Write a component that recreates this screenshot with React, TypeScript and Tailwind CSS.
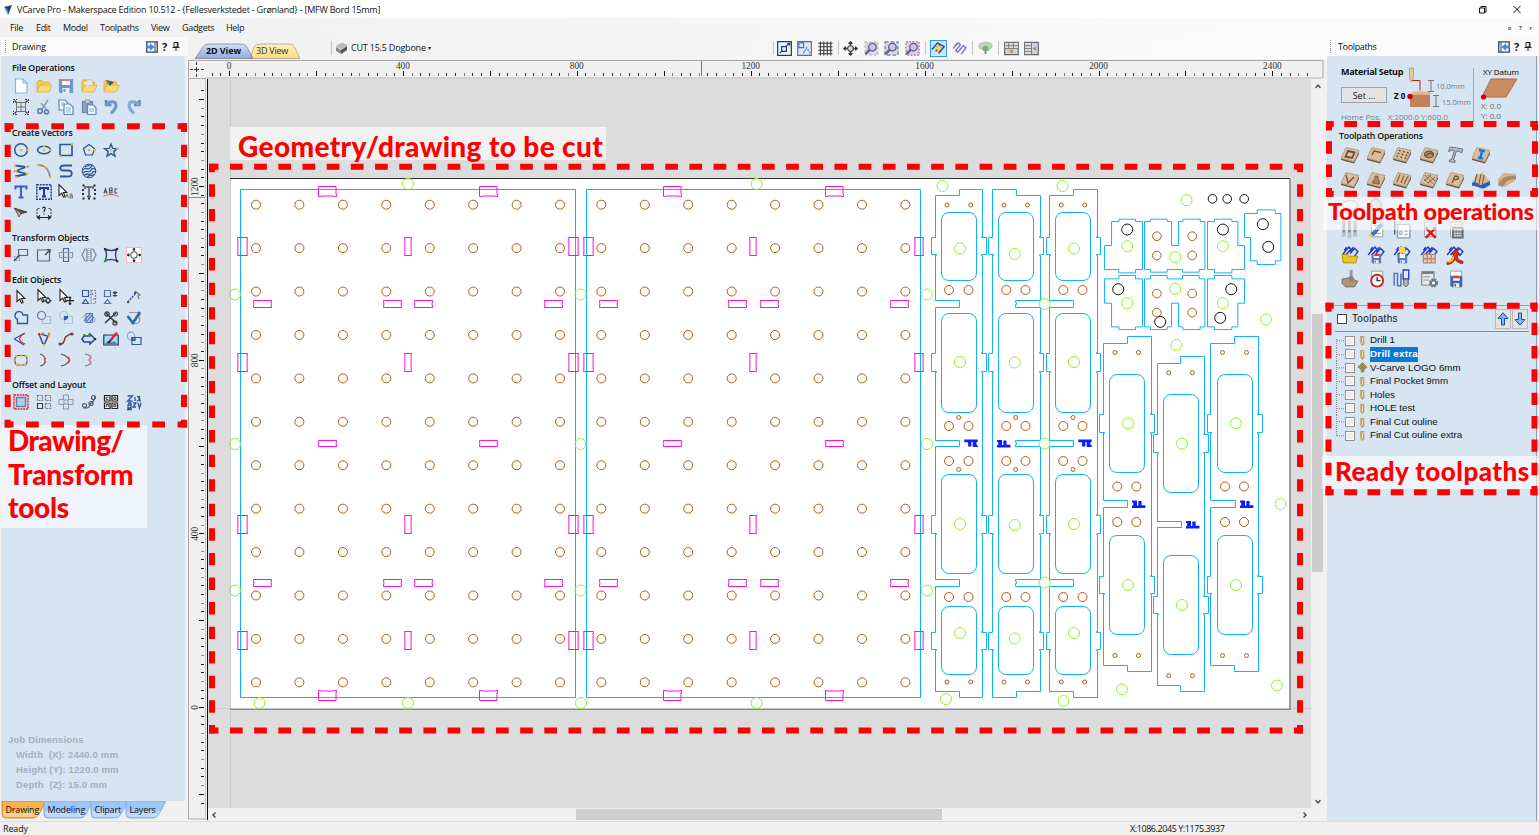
import React from "react";

const BROWN = "#b35c12";
const CYAN = "#12b2fb";
const LIME = "#86f81e";
const MAGENTA = "#f512e2";
const NAVY = "#2f5597";

/* ---------- icons ---------- */

const G = ({ children, s = 16 }: { children?: React.ReactNode; s?: number }) => (
  <svg width={s} height={s} viewBox="0 0 16 16" fill="none" stroke={NAVY} strokeWidth="1.2" className="block shrink-0 overflow-visible">
    {children}
  </svg>
);

const dot = (x: number, y: number, c = "#e8b33a") => <rect key={`${x}-${y}`} x={x - 1} y={y - 1} width="2.2" height="2.2" fill={c} stroke="none" />;

const folder = (
  <>
    <path d="M1 13.500V3.500l1-1h4l1.500 1.500h6V7" fill="#f3c85a" stroke="#d9a93c" strokeWidth=".8" />
    <path d="M1 14L4 7h12l-3 7z" fill="#fbd976" stroke="#e0ac3c" strokeWidth=".8" />
  </>
);
const floppy = (c: string) => (
  <>
    <path d="M1.500 1.500h13v13h-12l-1-1z" fill={c} stroke={c} />
    <path d="M4 1h8v6H4z" fill="#fff" stroke="none" />
    <path d="M4.500 10h7v5h-7z" fill="#e8edf5" stroke="none" />
    <path d="M5.500 11h2v3h-2z" fill={c} stroke="none" />
  </>
);
const arrowCursor = <path d="M4 1.500v11l2.700-2.400 1.800 4 1.600-.7-1.700-3.900h3.400z" fill="#fff" stroke="#222" strokeWidth="1.100" />;

const fileIcons: React.ReactNode[][] = [
  [
    <G key="a"><path d="M2.500 1h7.500l4 4v10h-11.500z" fill="#fdfeff" stroke="#8fb2dc" /><path d="M10 1v4h4" stroke="#8fb2dc" /></G>,
    <G key="b">{folder}</G>,
    <G key="c">{floppy("#6d97cf")}<path d="M4 1h8v2H4z" fill="#e57f67" stroke="none" /></G>,
    <G key="d"><path d="M2 2h8v9H2z" fill="#fff" stroke="#e0ac3c" />{folder}<path d="M3 4l7-2 2 5H4z" fill="#dbe8f8" stroke="none" /></G>,
    <G key="e">{folder}<path d="M3 2l8 2-4 4z" fill="#555" stroke="none" /><circle cx="5" cy="5" r="1.500" fill="#4a8" stroke="none" /></G>,
  ],
  [
    <G key="a"><path d="M3.500 3.500h9v9h-9zM8 3.500v9M3.500 8h9" stroke="#666" strokeWidth=".9" /><path d="M.5 4V.5H4M12 .5h3.500V4M15.500 12v3.500H12M4 15.500H.5V12" stroke="#333" strokeWidth="1" strokeDasharray="2 1" /><path d="M1.500 1.500l2 2M14.500 1.500l-2 2M14.500 14.500l-2-2M1.500 14.500l2-2" stroke="#333" /></G>,
    <G key="b"><path d="M12 1L6 10M5 4l6 7" stroke="#8a9bb5" strokeWidth="1.600" /><circle cx="4" cy="12" r="2.300" stroke="#5779ad" strokeWidth="1.600" /><circle cx="10.500" cy="13" r="2" stroke="#5779ad" strokeWidth="1.600" /></G>,
    <G key="c"><path d="M1 1h6l2.500 2.500V11H1z" fill="#f3f8ff" stroke="#5d86be" /><path d="M6 5h6l3 3v7.500H6z" fill="#f3f8ff" stroke="#5d86be" /><path d="M8 9h5M8 11h5M8 13h5M3 4h3M3 6h2" stroke="#6f98d0" strokeWidth=".8" /></G>,
    <G key="d"><path d="M1.500 2.500h10v11h-10z" fill="#8c9fc9" stroke="#6e80ad" /><path d="M4 1h5v3H4z" fill="#d6d6dd" stroke="#777" strokeWidth=".7" /><path d="M6.500 6h6l2.500 3v6.500H6.500z" fill="#f3f8ff" stroke="#5d86be" /><path d="M8 10h5M8 12h5" stroke="#6f98d0" strokeWidth=".8" /></G>,
    <G key="e"><path d="M3 7V1M2.500 6h6" stroke="#5f88c2" strokeWidth="2.600" /><path d="M3 6.500c3-5 10-5 10 0 0 3-2 5-5 8" stroke="#7196cb" strokeWidth="3" /></G>,
    <G key="f"><path d="M13.500 7V1M14 6H8" stroke="#5f88c2" strokeWidth="2.600" /><path d="M13 6.500C10 1.500 3 1.500 3 6.500c0 3 2 5 5 8" stroke="#84a6d3" strokeWidth="3" /></G>,
  ],
];

const vectorIcons: React.ReactNode[][] = [
  [
    <G key="a"><circle cx="8" cy="8" r="6.300" strokeWidth="1.500" />{dot(8, 8)}{dot(14.500, 8)}</G>,
    <G key="b"><ellipse cx="8" cy="8" rx="6.500" ry="3.800" strokeWidth="1.500" />{dot(8, 8)}{dot(8, 4)}{dot(14.500, 8)}</G>,
    <G key="c"><path d="M2 2.500h12v11H2z" strokeWidth="1.600" />{dot(14, 2)}{dot(2, 14)}</G>,
    <G key="d"><path d="M8 2.500l5.500 4-2 6.500h-7l-2-6.500z" />{dot(8, 8)}{dot(13.500, 8)}</G>,
    <G key="e"><path d="M8 2l1.700 4.400 4.800.2-3.800 3 1.300 4.600L8 11.600l-4 2.600 1.300-4.600-3.800-3 4.800-.2z" strokeWidth="1.400" />{dot(8, 8)}{dot(14.500, 7)}</G>,
  ],
  [
    <G key="a"><path d="M2 2.500l11 1.500L3 8l11 3-12 2.500" strokeWidth="1.800" />{dot(2, 3)}{dot(13, 4)}{dot(3, 8)}{dot(14, 11)}{dot(3, 14)}</G>,
    <G key="b"><path d="M2 2c7 0 11 5 12 12" strokeWidth="1.600" stroke="#888" />{dot(2, 2)}{dot(9, 4)}{dot(14, 14)}</G>,
    <G key="c"><path d="M14 2.500H6c-5 0-5 5 0 5h4c5 0 5 6 0 6H2" strokeWidth="1.800" /></G>,
    <G key="d"><circle cx="8" cy="8" r="6.800" strokeWidth="1" /><path d="M2 7c3-4 5 1 7-2s2-3 3-3M2 10c4-4 6 1 8-3 1-2 2-2 4-1M3 13c3-5 6 1 8-3 1-2 2-2 4-1M6 14.500c2-4 4 0 7-3M4 4c2-2 4 0 5-2.500" strokeWidth="1.300" /></G>,
  ],
  [
    <G key="a"><path d="M2.500 5.500v-3h11v3M8 2.500v11M5.500 13.500h5" stroke="#4355b5" strokeWidth="1.900" /></G>,
    <G key="b"><path d="M.8.8h14.400v14.400H.8z" stroke="#26339a" strokeWidth="1.500" strokeDasharray="2 1" /><path d="M4 6V4h8v2M8 4v8.500M6 12.500h4" stroke="#26339a" strokeWidth="2" /></G>,
    <G key="c"><g transform="translate(-3 -1)">{arrowCursor}</g><path d="M7.500 14L9 10l1.500 4M12 10v4h2.500v-2H12M12 10h2v2" stroke="#777" strokeWidth="1" /></G>,
    <G key="d"><path d="M4 5V3h8v2M8 3v9M6 12.500h4" stroke="#555" strokeWidth="1.500" /><path d="M1.500 1.500h2M12.500 1.500h2M1.500 14.500h2M12.500 14.500h2M7 14.500h2M2 5v2M2 9v2M14 5v2M14 9v2" stroke="#222" strokeWidth="1.800" /></G>,
    <G key="e"><path d="M1 9.500L2.500 5 4 9.500M1.500 8h2M6.500 4v5h2.500V4H6.500M6.500 6.500h2.500M14.500 5H12v4h2.500" stroke="#555" strokeWidth="1.200" /><path d="M.5 12.500c4-2.500 10-2.500 15 0" stroke="#b55" strokeWidth=".9" /></G>,
  ],
  [
    <G key="a"><path d="M1 3l13 4-7 2z" fill="#555" stroke="#333" strokeWidth=".8" /><path d="M2 4l4 8 2-4z" fill="#e9a58f" stroke="#444" strokeWidth=".8" /></G>,
    <G key="b"><path d="M1 12V3.500h3.500M15 12V3.500h-3.500" stroke="#555" strokeDasharray="2 1" /><path d="M1.500 12.500h13M4 10.500l-2.500 2 2.500 2M12 10.500l2.500 2-2.500 2M8 8.500v1" stroke="#222" /><path d="M6.500 3.500c.5-2 3-1.500 2.800 0C9 5 8 5 8 7" stroke="#222" /></G>,
  ],
];

const transformIcons: React.ReactNode[][] = [
  [
    <G key="a"><path d="M5.500 2.500h9v6h-9z" stroke="#57698b" /><path d="M1.500 9.500h5v4h-5z" stroke="#9fb0ca" /><path d="M1 14l6-6" stroke="#444" /></G>,
    <G key="b"><path d="M1.500 3h12v11h-12z" stroke="#57698b" /><path d="M9 8l5-5M11 2.500h3v3" stroke="#444" /></G>,
    <G key="c"><path d="M5.500 1.500h5v13h-5z" stroke="#57698b" /><path d="M1.500 5.500h13v5h-13z" stroke="#8a9ab5" /></G>,
    <G key="d"><path d="M6 2v12H4L1 8l3-6zM10 2v12h2l3-6-3-6z" stroke="#7d8ca6" /><path d="M8 1v14" stroke="#999" strokeDasharray="1 1" /></G>,
    <G key="e"><path d="M2 2c4 2 8 2 12 0-2 4-2 8 0 12-4-2-8-2-12 0 2-4 2-8 0-12z" stroke="#33466e" strokeWidth="1.400" />{dot(2, 14, "#2a2")}{dot(14, 2, "#333")}{dot(14, 14, "#333")}{dot(2, 2, "#333")}</G>,
    <G key="f"><path d="M.5.500h15v15H.500z" fill="#fff" stroke="#f2bcbc" /><circle cx="8" cy="8" r="3.200" stroke="#555" strokeWidth="1.100" /><path d="M8 1v3M8 12v3M1 8h3M12 8h3" stroke="#222" /><path d="M6.300 3L8 .8 9.700 3zM6.300 13L8 15.200 9.700 13zM3 6.300L.8 8 3 9.700zM13 6.300L15.200 8 13 9.700z" fill="#222" stroke="none" /></G>,
  ],
];

const editIcons: React.ReactNode[][] = [
  [
    <G key="a">{arrowCursor}</G>,
    <G key="b"><g transform="translate(-2 -1)">{arrowCursor}</g><circle cx="12" cy="11.500" r="2" stroke="#222" /><path d="M12 8v1.500M12 13.500V15M8.500 11.500H10M14 11.500h1.500" stroke="#222" /></G>,
    <G key="c"><g transform="translate(-2 -1)">{arrowCursor}</g><path d="M12 8v7.500M8 11.700h8M10.800 9.200L12 8l1.200 1.200M10.800 14.300l1.200 1.200 1.200-1.200" stroke="#222" strokeWidth="1.200" /></G>,
    <G key="d"><path d="M1.500 1.500h6v6h-6zM4.500 10.500l3 4h-6z" stroke="#3f52a3" /><path d="M10 1.500h4.500v13H10zM11.500 4v3M13 9v3" stroke="#888" strokeDasharray="2 1" /></G>,
    <G key="e"><path d="M1.500 1.500h6v6h-6zM4.500 10.500l3 4h-6z" stroke="#5a6cb5" /><path d="M10 3l4 4M14 3l-4 4M12 2v6" stroke="#444" /></G>,
    <G key="f"><path d="M2 13L9 5" stroke="#3b4fa5" strokeDasharray="2 1" strokeWidth="1.500" /><path d="M9 2l5 4-2 1 1 3" stroke="#777" />{dot(2, 13, "#555")}{dot(9, 4, "#3b4fa5")}</G>,
  ],
  [
    <G key="a"><path d="M5 9.500A4 4 0 1 1 10 5h4.500v8.500h-10V9.500z" strokeWidth="1.400" /></G>,
    <G key="b"><circle cx="5.500" cy="5.500" r="4" stroke="#5a7bb0" /><path d="M6.500 13.500h8v-7h-4M6.500 13.500V10" stroke="#a5b7d2" /></G>,
    <G key="c"><circle cx="5.500" cy="5.500" r="4" stroke="#b5c4dc" /><path d="M6.500 6.500h8v7h-8z" stroke="#b5c4dc" /><path d="M6.500 6.500h3c0 2-1 3-3 3z" fill="#4f70a8" /></G>,
    <G key="d"><path d="M5 3.500h6.500v9H5z" stroke="#5a7bb0" /><path d="M3 11L10 3M5 12.500l6.500-8M8 13l5-6" stroke="#5a7bb0" /><path d="M2 8a3 3 0 0 1 3-3M14 8a3 3 0 0 1-3 4" stroke="#9fb0ca" /></G>,
    <G key="e"><path d="M2 13L14 2M3 3l10 10" stroke="#333" strokeWidth="1.500" /><circle cx="4" cy="4" r="2.200" stroke="#333" /><circle cx="12.500" cy="4" r="2" stroke="#555" /><circle cx="12" cy="13" r="2" stroke="#333" /></G>,
    <G key="f"><path d="M3 2.500h9c3 0 2 4 0 5 3 1 2 6-2 6H5" stroke="#8a9ab0" /><path d="M1.500 6l5.500 7 7-11" stroke="#2f6ca3" strokeWidth="2.600" /></G>,
  ],
  [
    <G key="a"><path d="M12 2C8 4 5 6 1 8" /><path d="M1.500 8L11 14" /><path d="M11 3C5 6 5 10 12 13" stroke="#c33" strokeWidth="1.300" /></G>,
    <G key="b"><path d="M3 3l4 10M13 3L8 14M5 3l6 2" stroke="#3b4fa5" strokeWidth="1.600" />{dot(3, 3, "#e22")}{dot(7, 2)}{dot(13, 2)}{dot(13, 5)}{dot(8, 14, "#e8b33a")}</G>,
    <G key="c"><path d="M2 13c6 1 3-7 7-8 2-1 2-2 5-2" stroke="#9d3040" strokeWidth="1.500" /><circle cx="2" cy="13" r="1" stroke="#444" /><circle cx="14" cy="3" r="1" stroke="#444" /></G>,
    <G key="d"><path d="M3 5h6V3l5 5-5 5v-2H3L1 8z" stroke="#2c3f9f" strokeWidth="1.500" />{dot(3, 4, "#2a2")}{dot(8, 4, "#2a2")}{dot(14, 8, "#333")}</G>,
    <G key="e"><path d="M.8 4h14.400v10H.8z" fill="#a9d6f7" stroke="#234" /><path d="M1.500 13.500l4-4 3 2 3-1 3 3z" fill="#4b7d9c" stroke="none" /><path d="M7 10l4-5 3-3.500" stroke="#d23" strokeWidth="2.400" /><path d="M5 12l2.500-2.500" stroke="#222" strokeWidth="1.500" /></G>,
    <G key="f"><circle cx="5" cy="5" r="3.800" stroke="#8aa3cb" /><path d="M6 6.500h9v7H6z" fill="#cfe6fa" /><path d="M6 6.500h3v3H6z" fill="#5784c4" /></G>,
  ],
  [
    <G key="a"><rect x="2" y="3.500" width="12" height="9.500" rx="3.500" />{[[3, 4], [8, 3.500], [13, 4], [1.500, 8], [14, 8], [4, 13], [8, 13], [12, 13]].map(([x, y]) => dot(x, y))}</G>,
    <G key="b"><path d="M4 2c4 1 5 4 5 5M4 14c3 0 5-3 5-4" stroke="#555" /><path d="M9 6v5" stroke="#d33" strokeWidth="1.500" /></G>,
    <G key="c"><path d="M3 2c5 1 7 4 8 5M3 14c5-1 7-3 8-5" stroke="#555" /><path d="M10 5c2 2 2 4 0 6" stroke="#d33" strokeWidth="1.500" /></G>,
    <G key="d"><path d="M4 2c5 1 6 3 6 4M4 14c5-1 6-3 6-4" stroke="#777" /><path d="M10 6l-2 2 2 2" stroke="#d66" strokeWidth="1.300" /></G>,
  ],
];

const layoutIcons: React.ReactNode[][] = [
  [
    <G key="a"><path d="M1 1h14v14H1z" stroke="#d22" strokeWidth="1.400" strokeDasharray="2 .8" /><path d="M3.500 3.500h9v9h-9z" fill="#b9cdea" stroke="#6681b0" strokeWidth="1.500" /></G>,
    <G key="b"><path d="M1.500 9.500h5v5h-5z" stroke="#444" /><path d="M1.500 1.500h5v5h-5zM9.500 1.500h5v5h-5zM9.500 9.500h5v5h-5z" stroke="#777" strokeDasharray="2 1" /></G>,
    <G key="c"><path d="M5.500 1h5v5h-5zM5.500 10h5v5h-5zM1 5.500h5v5H1zM10 5.500h5v5h-5z" stroke="#7f8ea6" strokeWidth=".9" /></G>,
    <G key="d"><path d="M2 14h4c3 0 2-3 4-5 3-2 4-4 4-7" stroke="#3b4fa5" /><circle cx="3.500" cy="11.500" r="2" stroke="#555" /><circle cx="12.500" cy="3.500" r="2" stroke="#555" /><circle cx="10" cy="9.500" r="2" stroke="#555" /></G>,
    <G key="e"><path d="M1.500 1.500h5.500v5.500H1.500zM9 1.500h5.500v5.500H9zM1.500 9h5.500v5.500H1.500zM9 9h5.500v5.500H9z" fill="#fff" stroke="#222" strokeWidth="1.200" /><path d="M5.500 3.200H3.200v2.200h2.300M10.800 3v2.500h2V3z M3.300 13v-2.500h2V13M10.800 10.500h2v2.200h-2z" stroke="#222" strokeWidth=".9" /></G>,
    <G key="f"><path d="M1.500 2h5l-5 5h5M9 3v4M11 2.500c3 0 3 4 0 4.500M14 2c-2 2 1 4 0 6M2 9h3v5H2v-3h3M7 9h3l-3 4h3M12 9l1.500 5L15 9M1 15.500h5" strokeWidth="1.300" /></G>,
  ],
];

/* wooden tile with an engraved mark */
const Tile = ({ children }: { children?: React.ReactNode }) => (
  <svg width="20" height="18" viewBox="0 0 20 18" fill="none" stroke="#65503f" strokeWidth="1.300" className="block shrink-0">
    <path d="M1 12.500L14 16l5-10.500v2.500l-5 9.500L1 14z" fill="#6f523c" stroke="none" />
    <path d="M6 1.500L19 4.500 14 15.500 1 12z" fill="#dcbd9a" stroke="#a98a6c" strokeWidth=".7" />
    {children}
  </svg>
);

const opIcons: React.ReactNode[][] = [
  [
    <Tile key="a"><path d="M8 5l6.500 1.500-2.500 5.500L5.500 10.500z" strokeWidth="1.800" /></Tile>,
    <Tile key="b"><path d="M6 9l2-4 7 1.500" /></Tile>,
    <Tile key="c"><path d="M8 4l-3 7M12 5l-3 7M16 6l-3 7" strokeDasharray="1.500 1.500" strokeWidth="1.800" /></Tile>,
    <Tile key="d"><ellipse cx="10" cy="8.500" rx="4.500" ry="3.300" fill="#b3906f" /><path d="M7 10c2-3 5-3 7-2" /></Tile>,
    <svg key="e" width="20" height="18" viewBox="0 0 20 18" fill="#b9bec6" stroke="#6d737c" strokeWidth="1"><path d="M5 1l13 2-1.500 4-2-1.500-3-.5-3 9 2 1-.5 1.500-6-1 .5-1.500 2-.3 3-9-3-.5-3 1.500z" /></svg>,
    <Tile key="f"><path d="M8 4l6 1.300M7 11.500l5 1.200M11 5l-1.500 7" stroke="#1277e0" strokeWidth="2.400" /></Tile>,
  ],
  [
    <Tile key="a"><path d="M6 4l2 8 6-6" /></Tile>,
    <Tile key="b"><path d="M7 12c-2-3 3-2 2-5s4-2 3 0 3 3 1 6z" fill="#a98765" stroke="#8b6b4e" /></Tile>,
    <Tile key="c"><path d="M8 3.500L5 11M12 4.500L9 12M16 5L12 13" stroke="#80624a" /></Tile>,
    <Tile key="d"><path d="M6 4l8 9M9 4l7 6M5 8l5 5M12 4L5 10M16 6l-7 6" stroke="#80624a" strokeWidth=".9" /></Tile>,
    <Tile key="e"><path d="M7 12l3-7c5 0 5 4-1 3.500" stroke="#6f5641" /></Tile>,
    <svg key="f" width="20" height="18" viewBox="0 0 20 18"><path d="M1 12L6 2l3 2 2-3 8 9v4l-4 2z" fill="#dcb78a" /><path d="M1 12c4-3 6 2 9 2l9-4v4l-6 3.500C8 18 5 14 1 15z" fill="#1f62c8" /><path d="M6 3L4 11M10 3L8 13M13 4l-1.500 9" stroke="#6e543c" /></svg>,
    <svg key="g" width="20" height="18" viewBox="0 0 20 18"><path d="M1 8L6 2l13 1v6L8 16l-7-2z" fill="#d8b28b" /><path d="M1 14C3 8 9 4 19 5v3C11 8 8 11 6 16z" fill="#a7886a" /></svg>,
  ],
];

const sheet = <path d="M4 1h10v13H4z" fill="#fff" stroke="#8a97ac" strokeWidth=".8" />;
const hatch = <path d="M1 8l6-7 2 2-5 5M8 7l4-5 3 3-3 4M3 4l2-3M8 5l3-4" stroke="#2639c2" strokeWidth="1.300" />;
const rightIcons: React.ReactNode[][] = [
  [
    <G key="a" s={18}><ellipse cx="8" cy="8" rx="7" ry="4" fill="#eee" stroke="#aaa" /></G>,
    <G key="b" s={18}><circle cx="8" cy="8" r="5" fill="#ccc" stroke="#999" /></G>,
  ],
  [
    <G key="a" s={18}><path d="M2.500 0v13M7.500 0v13M12.500 0v13" stroke="#858b92" strokeWidth="2.600" /><path d="M2.500 10v4M7.500 10v5M12.500 10v4" stroke="#bcc1c6" strokeWidth="3.200" /></G>,
    <G key="b" s={18}>{sheet}<path d="M6 4h6M6 11h6" stroke="#aaa" /><path d="M4 11l8-9 2 2-8 9z" fill="#4470c8" stroke="#2d54a3" strokeWidth=".8" /><path d="M1 14.500l2-3.500 2.500 2.500z" fill="#eac447" stroke="none" /></G>,
    <G key="c" s={18}><path d="M1.500 0v12" stroke="#555" /><path d="M2 3h13v12H4V4z" fill="#f6f8fb" stroke="#8a97ac" /><path d="M6 9h2v3H6zM10 9h3M10 12h3" stroke="#999" strokeWidth=".8" /></G>,
    <G key="d" s={18}>{sheet}<path d="M5 4h8M5 6h8" stroke="#bbb" /><path d="M5 6l9 9M14 6l-9 9" stroke="#d81c1c" strokeWidth="2.200" /></G>,
    <G key="e" s={18}>{sheet}<path d="M5 3h8M5 5h8" stroke="#bbb" /><path d="M6 6h9v9H6z" fill="#8b9097" stroke="#5f646b" /><path d="M7.500 8h6M7.500 11h6M7.500 13h6" stroke="#eee" strokeDasharray="1.200 1" /></G>,
  ],
  [
    <G key="a" s={18}>{hatch}<path d="M1 7.500h5l1 1.500h8L13 15H2z" fill="#e8c822" stroke="#a98c13" strokeWidth=".8" /></G>,
    <G key="b" s={18}>{hatch}<g transform="translate(3.500 6.500) scale(.6)">{floppy("#5979b5")}</g><path d="M6.500 7h4v2H6.500z" fill="#d33" stroke="none" /></G>,
    <G key="c" s={18}>{hatch}<circle cx="8" cy="3.500" r="3" fill="#f2e03a" stroke="none" /><g transform="translate(3.500 6.500) scale(.6)">{floppy("#5979b5")}</g></G>,
    <G key="d" s={18}>{hatch}<path d="M3 7.500h10.500v7.500H3z" fill="#e9cfb9" stroke="#b58c76" /><path d="M3 11.300h10.500M6.500 7.500v7.500M10 7.500v7.500" stroke="#b58c76" /></G>,
    <G key="e" s={18}>{hatch}<path d="M1 14.500c5-1 4-4 6-6.500L5 7l4-4 3.500 4.500-2 .5c-1 3 1 5 4.500 5.500v2c-4 0-6-2-7-4-1 3-3 4.500-7 5z" fill="#d92a1c" stroke="#7d130b" strokeWidth=".7" /><path d="M1.500 14c4 0 5-3 5-5" stroke="#eec22b" strokeWidth="1.600" /></G>,
  ],
  [
    <G key="a" s={18}><path d="M1 8l6-1 8 3-3 5H4l-3-3z" fill="#b2967c" stroke="#6e5848" strokeWidth=".7" /><path d="M9 0v8" stroke="#9a9a9a" strokeWidth="2.600" /><circle cx="9" cy="8" r="2.500" fill="#8a8178" stroke="none" /></G>,
    <G key="b" s={18}>{sheet}<circle cx="9" cy="9.500" r="5.300" fill="#fff" stroke="#c22" strokeWidth="1.700" /><path d="M9 6v3.500h3" stroke="#333" /></G>,
    <G key="c" s={18}><path d="M1 14V3h3v11h3V3" stroke="#5a6cc0" strokeWidth="1.300" /><path d="M9 0h5v8H9z" fill="#e4e9fa" stroke="#2a3ab5" /><path d="M9.500 8h4v5l-2 2-2-2z" fill="#aeb5c2" stroke="#555" strokeWidth=".8" /></G>,
    <G key="d" s={18}><path d="M1.500 1.500h11v12h-11z" fill="#e6e8eb" stroke="#8f959c" /><path d="M2 2.500h10" stroke="#777" strokeWidth="2" /><path d="M3 6h6M3 9h5" stroke="#aaa" /><circle cx="12" cy="11.500" r="3" stroke="#6d737b" strokeWidth="2.200" strokeDasharray="1.700 .7" /><circle cx="12" cy="11.500" r="2" fill="#fff" stroke="#6d737b" /></G>,
    <G key="e" s={18}>{sheet}<g transform="translate(3.500 4.500) scale(.72)">{floppy("#3c62ad")}<path d="M4 1h8v3H4z" fill="#d33" stroke="none" /></g></G>,
  ],
];

/* ---------- left panel ---------- */

const IconRows = ({ rows }: { rows: React.ReactNode[][] }) => (
  <div className="pl-px">
    {rows.map((r, i) => (
      <div key={i} className="flex h-[21px]">
        {r.map((c, j) => (
          <div key={j} className="flex w-[22.5px] items-center justify-center pb-px">{c}</div>
        ))}
      </div>
    ))}
  </div>
);

const Heading = ({ children }: { children: React.ReactNode }) => (
  <h2 className="h-[14px] pl-[3px] text-[8.8px] leading-[14px] font-semibold tracking-[-0.12px] text-[#0c0c0c]">{children}</h2>
);

const HeaderButtons = ({ left }: { left?: boolean }) => (
  <div className="flex items-center gap-[4px]">
    <svg width="12" height="12" viewBox="0 0 12 12">
      <path d="M.8.800h10.400v10.400H.800z" fill="#fff" stroke="#2b4368" strokeWidth="1.300" />
      <path d={left ? "M9 1v10" : "M3 1v10"} stroke="#2b4368" />
      <path d={left ? "M0 4.500h4V2l4.500 4L4 10V7.500H0z" : "M12 4.500H8V2L3.500 6 8 10V7.500h4z"} fill="#4a86e0" />
    </svg>
    <span className="w-[6px] text-[11px] leading-none font-bold">?</span>
    <svg width="8" height="10" viewBox="0 0 8 10" fill="none" stroke="#222"><path d="M2 .500h4v4.500H2zM.500 5.500h7M4 5.500V9M5.300.500v5" /></svg>
  </div>
);

const Grip = () => <div className="h-[13px] w-0 border-l border-dotted border-[#999]" />;

const BottomTab = ({ label, w, active }: { label: string; w: number; active?: boolean }) => (
  <div className="relative -ml-[3px] h-[18px]" style={{ width: w }}>
    <svg className="absolute inset-0" width={w} height="18" preserveAspectRatio="none">
      <path d={`M1 0H${w}L${w - 7} 13Q${w - 9} 17 ${w - 13} 17H5Q1 17 1 13Z`} fill={active ? "#fbb24e" : "#9dc6fb"} stroke={active ? "#b67a2c" : "#7aa5dc"} strokeWidth=".8" />
      <path d={`M2 10H${w - 6}L${w - 8} 14Q${w - 10} 16 ${w - 13} 16H5Q2 16 2 13Z`} fill={active ? "#fdcf86" : "#bfdafd"} />
    </svg>
    <span className="relative block pl-[4.500px] text-[8.900px] leading-[18px] tracking-[-0.100px]">{label}</span>
  </div>
);

const LeftPanel = () => (
  <aside className="flex w-[188px] shrink-0 flex-col bg-[#f0f0f0]">
    <div className="flex h-[19px] items-center bg-[#fafafa] pr-[8px] pl-[5px]">
      <Grip />
      <span className="flex-1 pl-[6px] text-[9px] tracking-[-0.150px]">Drawing</span>
      <HeaderButtons left />
    </div>
    <div className="mr-[3px] ml-[1px] flex flex-1 flex-col bg-[#d7e4f2] pt-[5px] pl-[8px]">
      <Heading>File Operations</Heading>
      <div className="pt-px pb-[8px]"><IconRows rows={fileIcons} /></div>
      <Heading>Create Vectors</Heading>
      <div className="pb-[7px]"><IconRows rows={vectorIcons} /></div>
      <Heading>Transform Objects</Heading>
      <div className="pb-[7px]"><IconRows rows={transformIcons} /></div>
      <Heading>Edit Objects</Heading>
      <div className="pb-[7px]"><IconRows rows={editIcons} /></div>
      <Heading>Offset and Layout</Heading>
      <IconRows rows={layoutIcons} />
      <div className="mt-auto pb-[9px] font-['Liberation_Sans'] text-[9.500px] leading-[15px] font-bold tracking-[0.160px] whitespace-pre text-[#a3afbd]">
        <div className="-ml-px">Job Dimensions</div>
        <div className="pl-[7px]">{"Width  (X): 2440.0 mm"}</div>
        <div className="pl-[7px]">Height (Y): 1220.0 mm</div>
        <div className="pl-[7px]">{"Depth  (Z): 15.0 mm"}</div>
      </div>
    </div>
    <div className="flex h-[20px] pl-[4px]">
      <BottomTab label="Drawing" w={45} active />
      <BottomTab label="Modeling" w={50} />
      <BottomTab label="Clipart" w={38} />
      <BottomTab label="Layers" w={41} />
    </div>
  </aside>
);

/* ---------- top bars ---------- */

const menu: [string, number][] = [["File", 26], ["Edit", 27], ["Model", 37], ["Toolpaths", 51], ["View", 31], ["Gadgets", 44], ["Help", 30]];

const TopBars = () => (
  <>
    <header className="flex h-[18px] items-center bg-white pt-px pl-[3px] text-[9px]">
      <svg width="10" height="12" viewBox="0 0 10 12"><path d="M1 3L9 1 5 11 4 5z" fill="#1d3f6e" /><path d="M1 3l3 2 1 6z" fill="#5d87bd" /></svg>
      <span className="flex-1 pl-[4px] tracking-[-0.215px]">VCarve Pro - Makerspace Edition 10.512 - &#123;Fellesverkstedet - Grønland&#125; - [MFW Bord 15mm]</span>
      <svg width="60" height="10" viewBox="0 0 60 10" fill="none" stroke="#111"><path d="M.500 3h5v5h-5zM2 3V1.500h5V7H5.500M34.500 1l7 7M41.500 1l-7 7" /></svg>
    </header>
    <nav className="flex h-[19px] items-center bg-gradient-to-r from-[#f0f0f0] to-[#fcfcfc] pt-px pl-[10px] text-[9px] tracking-[-0.320px]">
      {menu.map(([m, w]) => (
        <span key={m} style={{ width: w }}>{m}</span>
      ))}
      <span className="ml-auto flex gap-[8px] pr-[7px] text-[6px] leading-none text-[#a05030]"><b>o</b><b className="text-[#456]">?</b><b>r</b></span>
    </nav>
  </>
);

const Sep = ({ wide }: { wide?: boolean }) => <div className={wide ? "mr-[3px] ml-[2px] h-[14px] w-px bg-[#c4c4c4]" : "mx-[2px] h-[14px] w-px bg-[#c4c4c4]"} />;
const Btn = ({ children, on }: { children: React.ReactNode; on?: boolean }) => (
  <div className="flex w-[20.5px] justify-center">
    <div className={on ? "flex size-[17px] items-center justify-center border border-[#2f97e8] bg-[#cde6f9]" : "flex size-[17px] items-center justify-center"}>{children}</div>
  </div>
);
const lens = (c: string, d?: string) => (
  <G s={15}>
    <path d="M1 1h14v14H1z" fill="#d5d8de" stroke={c} strokeWidth="1.300" strokeDasharray={d} />
    <circle cx="9" cy="6.500" r="4" fill="#c9c6e6" stroke="#625c86" strokeWidth="1.400" />
    <path d="M6 9.500L1.500 14" stroke="#625c86" strokeWidth="2.400" />
  </G>
);

const Toolbar = () => (
  <div className="flex h-[22px] items-center bg-gradient-to-r from-[#f1f1f1] to-[#fbfbfb]">
    <div className="flex h-full items-end">
      <div className="relative ml-[7px] flex h-[16px] w-[112px] text-[9px] leading-[16px]">
        <svg className="absolute inset-0" width="112" height="16" viewBox="0 0 112 16">
          <defs>
            <linearGradient id="t1" x2="0" y2="1"><stop stopColor="#d3e0f8" /><stop offset="1" stopColor="#8dabe2" /></linearGradient>
            <linearGradient id="t2" x2="0" y2="1"><stop stopColor="#fff0c0" /><stop offset="1" stopColor="#ffdc7c" /></linearGradient>
          </defs>
          <path d="M55 15.500L59 4Q61 1 65 1H94Q98 1 99.500 4L105 15.500Z" fill="url(#t2)" stroke="#999" strokeWidth=".7" />
          <path d="M0 15.500L8 4Q10 1 14 1H46Q50 1 52 4L58 15.500Z" fill="url(#t1)" stroke="#777" strokeWidth=".7" />
        </svg>
        <b className="relative w-[50px] pl-[11px] text-[9px] tracking-[-0.100px]">2D View</b>
        <span className="relative pl-[11px] tracking-[-0.250px] text-[#3a3222]">3D View</span>
      </div>
    </div>
    <div className="ml-[24px] h-[14px] w-px bg-[#c4c4c4]" />
    <svg className="mr-[4px] ml-[4px]" width="11" height="12" viewBox="0 0 11 12"><path d="M0 4l6-3 5 2-6 4zM0 5l5 3v4L0 9z" fill="#8a8a8a" /><path d="M5 8l6-4v4l-6 4z" fill="#555" /><path d="M0 4l6-3 5 2-6 4z" fill="#b9b9b9" /></svg>
    <span className="w-[82px] text-[9px] tracking-[-0.200px] whitespace-nowrap">CUT 15.5 Dogbone<span className="pl-[2px] align-middle text-[6px]">▾</span></span>
    <div className="ml-[340px] flex items-center">
      <div className="h-[14px] w-px bg-[#c4c4c4]" />
      <Btn><G s={15}><path d="M.700.700h14.600v14.600H.700z" fill="#eaf1fb" stroke="#273c74" strokeWidth="1.300" /><path d="M5 6h5v5H5zM3 13l3-3M9 6l4-3M11 2.500h2.500V5" stroke="#273c74" strokeWidth="1.300" /></G></Btn>
      <Btn><G s={15}><path d="M.700.700h14.600v14.600H.700z" fill="#d9e6f8" stroke="#4d6ea8" /><path d="M2 2h5v5H2z" stroke="#4d6ea8" /><path d="M7 13l3-6 4 6" stroke="#4d6ea8" strokeDasharray="2 1" /></G></Btn>
      <Btn><G s={15}><path d="M.500 2.500h15M.500 6.200h15M.500 9.900h15M.500 13.600h15M2.500.500v15M6.200.500v15M9.900.500v15M13.600.500v15" stroke="#333" strokeWidth="1.100" /></G></Btn>
      <Sep />
      <Btn><G s={15}><path d="M8 1v14M1 8h14M6 3l2-2 2 2M6 13l2 2 2-2M3 6L1 8l2 2M13 6l2 2-2 2" stroke="#333" strokeWidth="1.500" /><circle cx="8" cy="8" r="3" fill="#ddd" stroke="#444" /></G></Btn>
      <Btn>{lens("#bbb", "2 3")}</Btn>
      <Btn>{lens("#6f7fae", "4 2")}</Btn>
      <Btn>{lens("#c25ab5", "2 1.500")}</Btn>
      <Sep wide />
      <Btn on><G s={15}><path d="M1 9l6-7 3 2-5 7M8 13l6-7-3-2" stroke="#2639c2" strokeWidth="1.600" /><path d="M8 4l3.500 3.500-3.500 4L5 8z" fill="#f4e12d" stroke="#b5a514" strokeWidth=".8" /></G></Btn>
      <Btn><G s={15}><path d="M1 8l6-6 2 2-5 6 2 2 6-7 3 2-5 7M3 5l3-3M6 12l-2-2" stroke="#7b74c4" strokeWidth="1.500" /></G></Btn>
      <Sep wide />
      <Btn><G s={15}><path d="M1 6c1-6 13-6 14-1-1 4-3 2-4 5H6C5 8 2 9 1 6z" fill="#b5dcb5" stroke="#9ccb9c" /><circle cx="8" cy="8" r="3" fill="#8aa58a" stroke="none" /><path d="M8 9v5" stroke="#7c957c" strokeWidth="2" /></G></Btn>
      <Sep />
      <Btn><G s={15}><path d="M.700 1.500h14.600v13H.700z" fill="#c9cfe9" stroke="#666" /><path d="M1 2h14v6H1z" fill="#dedede" stroke="none" /><path d="M1 8h14M5 2v6M10 2v6M1 5h14" stroke="#666" strokeWidth=".8" /><path d="M8 9l3 2H9v2H7v-2H5z" fill="#c48a1e" stroke="none" /></G></Btn>
      <Btn><G s={15}><path d="M.700 1.500h14.600v13H.700z" fill="#c9cfe9" stroke="#666" /><path d="M1 2h7v12H1z" fill="#dedede" stroke="none" /><path d="M8 2v12M1 5h7M1 8h7M1 11h7" stroke="#666" strokeWidth=".8" /><path d="M9 8l4-2v4z" fill="#c48a1e" stroke="none" /></G></Btn>
    </div>
  </div>
);

/* ---------- rulers ---------- */

const range = (a: number, b: number) => Array.from({ length: b - a + 1 }, (_, i) => a + i);

const TopRuler = () => (
  <svg width="1118" height="20" viewBox="206 60 1118 20" className="block">
    <rect x="206" y="60" width="1118" height="17" fill="#f0f0f0" />
    <path d="M206 60.500h1117v17" stroke="#a9a9a9" fill="none" />
    <path d="M206 78h1117" stroke="#b5b5b5" />
    <path d="M207 79.500h1116" stroke="#222" />
    {range(-2, 124).map((i) => {
      const big = i % 10 === 0;
      return <rect key={i} x={Math.round(229 + i * 8.695)} y={big ? 71 : 73} width="1" height={big ? 5 : 3} fill={big ? "#111" : i % 3 ? "#333" : "#777"} />;
    })}
    <path d="M701.500 61v15" stroke="#777" />
    {[0, 400, 800, 1200, 1600, 2000, 2400].map((v) => (
      <text key={v} x={229 + v * 0.43475} y="69" textAnchor="middle" fontSize="9.300" fill="#333" fontFamily="Liberation Serif, serif">{v}</text>
    ))}
  </svg>
);

const SideRuler = () => (
  <svg width="20" height="741" viewBox="188 79 20 741" className="block shrink-0">
    <rect x="188" y="79" width="17" height="741" fill="#f0f0f0" />
    <path d="M188.500 79v740h17" stroke="#a9a9a9" fill="none" />
    <path d="M205.500 79v741" stroke="#c4c4c4" />
    <path d="M207.500 79v741" stroke="#111" />
    {range(-11, 71).map((i) => {
      const big = i % 10 === 0;
      return <rect key={i} x={big ? 199 : 201} y={Math.round(707 - i * 8.684)} width={big ? 5 : 3} height="1" fill={big ? "#111" : i % 3 ? "#222" : "#888"} />;
    })}
    <path d="M189 197.500h16" stroke="#888" />
    {[0, 400, 800, 1200].map((v) => (
      <text key={v} transform={`translate(198 ${707.5 - v * 0.4341}) rotate(-90)`} textAnchor="middle" fontSize="9.300" fill="#222" fontFamily="Liberation Serif, serif">{v}</text>
    ))}
  </svg>
);

/* ---------- job drawing ---------- */

const colX = [256, 299.400, 342.900, 386.300, 429.800, 473.200, 516.600, 560, 601.300, 644.800, 688.200, 731.700, 775.100, 818.500, 862, 905.400];
const holeRows = range(0, 11).map((i) => 204.700 + i * 43.420);

const tallSlots = [237.500, 353.500, 515.500, 631.500];
const tallX: [number, number][] = [[237.500, 10], [404.500, 7], [568.500, 10], [583.500, 10], [749.500, 7], [914.500, 9]];
const wideX = [253.500, 383.500, 414.500, 544.500, 599.500, 728.500, 760.500, 890.500];
const midX = [318.500, 479.500, 663.500, 825.500];

const greens: [number, number][] = [
  [408, 184], [756.500, 184], [235, 294.500], [580.500, 294.500], [926.700, 294.500], [235, 444], [580.500, 444], [927, 444],
  [235, 590.500], [580.500, 590.500], [927, 590.500], [259.500, 703], [408, 703], [581, 703], [756.500, 703], [942.500, 186], [1062.500, 186],
  [946, 699], [1063.500, 701], [1122, 689.500], [1277, 685.500], [1280.500, 504], [1266, 319.500], [1176.500, 345],
  [1044.500, 304], [1044.500, 443.500], [1044.500, 582.500],
  [960, 248.500], [960, 362], [960, 524], [960, 633], [1014.700, 254], [1014.700, 362.500], [1014.700, 525], [1014.700, 638.500],
  [1074, 248.500], [1074, 362], [1074, 524], [1074, 633], [1128, 423.300], [1128, 585], [1182, 443.500], [1182, 605], [1236, 423.300], [1236, 585],
];

interface Strip {
  l: number; r: number; lt: number; rt: number;
  top: [number, number]; bottom: [number, number]; mid: number;
  tabs: [number, number][]; slots: [number, number][]; slotRight?: boolean; slotEnd: number;
}

/* outline of a leg strip with side tabs and cross slots */
const stripPath = (s: Strip) => {
  const rightEdge: [number, string][] = s.tabs.map(([a, b]) => [a, `V${a}h-1v-1h1v1H${s.rt}V${b}H${s.r}h-1v1h1`]);
  const leftEdge: [number, string][] = s.tabs.map(([a, b]) => [a, `V${b}h1v1h-1v-1H${s.lt}V${a}H${s.l}`]);
  s.slots.forEach(([a, b]) => {
    if (s.slotRight) rightEdge.push([a, `V${a}H${s.slotEnd}v2h1v2h-1V${b}H${s.r}`]);
    else leftEdge.push([a, `V${b}H${s.slotEnd}V${a}H${s.l}`]);
  });
  rightEdge.sort((p, q) => p[0] - q[0]);
  leftEdge.sort((p, q) => q[0] - p[0]);
  return `M${s.l} ${s.top[0]}H${s.mid}V${s.top[1]}H${s.r}${rightEdge.map((e) => e[1]).join("")}V${s.bottom[1]}H${s.mid}V${s.bottom[0]}H${s.l}${leftEdge.map((e) => e[1]).join("")}Z`;
};

const tabsA: [number, number][] = [[237.500, 254.500], [353.500, 371.500], [515.500, 533.500], [632.500, 649.500]];
const slotsA: [number, number][] = [[300.500, 307.500], [440.500, 446.500], [579.500, 586.500]];
const tabsD: [number, number][] = [[414.500, 432.500], [576.500, 593.500]];
const strips: Strip[] = [
  { l: 935.500, r: 982.500, lt: 931.500, rt: 986.500, top: [195.500, 189.500], bottom: [691.500, 697.500], mid: 959.500, tabs: tabsA, slots: slotsA, slotEnd: 959.500 },
  { l: 992.500, r: 1040.500, lt: 988.500, rt: 1043.500, top: [189.500, 195.500], bottom: [697.500, 691.500], mid: 1016.500, tabs: tabsA, slots: slotsA, slotRight: true, slotEnd: 1015.500 },
  { l: 1049.500, r: 1097.500, lt: 1046.500, rt: 1100.500, top: [195.500, 189.500], bottom: [691.500, 697.500], mid: 1073.500, tabs: tabsA, slots: slotsA, slotEnd: 1073.500 },
  { l: 1103.500, r: 1151.500, lt: 1099.500, rt: 1154.500, top: [343.500, 336.500], bottom: [665.500, 671.500], mid: 1127.500, tabs: tabsD, slots: [[500.500, 507.500]], slotEnd: 1127.500 },
  { l: 1157.500, r: 1204.500, lt: 1153.500, rt: 1208.500, top: [363.500, 356.500], bottom: [685.500, 691.500], mid: 1180.500, tabs: [[434.500, 452.500], [596.500, 613.500]], slots: [[521.500, 527.500]], slotEnd: 1181.500 },
  { l: 1210.500, r: 1258.500, lt: 1207.500, rt: 1262.500, top: [343.500, 336.500], bottom: [665.500, 671.500], mid: 1234.500, tabs: tabsD, slots: [[500.500, 507.500]], slotEnd: 1235.500 },
];

const pockets: [number, number, number][] = [
  ...[941.500, 998.500, 1055.500].flatMap((x) => [[x, 212.500, 68], [x, 313.500, 99], [x, 474.500, 99], [x, 606.500, 68]] as [number, number, number][]),
  [1109.500, 374.500, 98], [1109.500, 535.500, 99], [1217.500, 374.500, 98], [1217.500, 535.500, 99], [1163.500, 394.500, 98], [1163.500, 555.500, 99],
];

const tiny: [number, number][] = [
  ...[947, 970.700, 1004, 1027.500, 1061.300, 1084.700].flatMap((x) => [[x, 205], [x, 682]] as [number, number][]),
  ...[958.700, 1015.700, 1073].flatMap((x) => [[x, 417.500], [x, 469.500]] as [number, number][]),
  ...[1115, 1138.500, 1222.500, 1246.500].flatMap((x) => [[x, 352.500], [x, 655.500]] as [number, number][]),
  [1168.700, 372.700], [1192.500, 372.700], [1168.700, 675.700], [1192.500, 675.700],
];
const mids: [number, number][] = [
  ...[949, 968.500, 1006.300, 1025.500, 1063.300, 1082.500].flatMap((x) => [290, 426, 461, 597].map((y) => [x, y] as [number, number])),
  ...[1117.300, 1136.300, 1225, 1244].flatMap((x) => [486.500, 522].map((y) => [x, y] as [number, number])),
];

/* coordinates of the small brackets, in thirds of a unit */
const brackets = [
  "M574 184H596V177H646V184H667V328H646V338H596V328H553V256H574Z",
  "M673 184H691V177H741V184H754V256H775V184H788V177H840V184H854V328H837V336H787V328H741V336H691V328H673Z",
  "M862 184H883V177H935V184H953V256H973V328H935V338H883V328H862Z",
  "M553 356H596V346H646V356H667V500H646V508H596V500H574V429H553Z",
  "M673 356H691V346H741V356H787V346H837V356H854V500H840V508H788V500H775V429H754V500H741V508H691V500H673Z",
  "M862 356H883V346H935V356H973V429H953V500H935V508H883V500H862Z",
  "M973 160H1011V149H1065V160H1082V302H1065V313H1011V302H991V232H973Z",
];
const bracketCircles: [string, number, number[][]][] = [
  ["#111", 16.500, [[621, 208], [908, 208], [1028, 192], [1044, 260], [594, 387], [933, 387], [720, 485], [900, 473]]],
  ["#111", 13, [[877, 116], [921, 116], [972, 116]]],
  [LIME, 16.500, [[799, 120], [621, 258], [765, 291], [908, 258], [765, 386], [621, 429], [908, 429]]],
  [BROWN, 13, [[710, 228], [816, 228], [710, 286], [816, 286], [710, 400], [816, 400], [710, 457], [816, 457]]],
];

const fMarks: [number, number, boolean][] = [[964.300, 440, true], [1078.300, 440, true], [997, 440, false], [1132, 500.500, false], [1186, 521, false], [1240, 500.500, false]];

const Board = () => (
  <svg width="1103" height="729" viewBox="208 79 1103 729" fill="none" className="block">
    <rect x="208" y="79" width="1103" height="729" fill="#dcdcdc" />
    <path d="M230.500 80V808M208 708.500H1311" stroke="#cbcbcb" />
    <rect x="231" y="179" width="1059" height="530" fill="#fff" />
    <path d="M230 178.500H1290" stroke="#333" />
    <path d="M1290 179V709.300M230 709.300H1291" stroke="#8a8a8a" strokeWidth="1.600" />
    <g stroke={BROWN}>
      {colX.flatMap((x) => holeRows.map((y) => <circle key={`${x} ${y}`} cx={x} cy={y} r="4.500" />))}
      {mids.map(([x, y]) => <circle key={`${x} ${y}`} cx={x} cy={y} r="4.500" />)}
      {tiny.map(([x, y]) => <circle key={`${x} ${y}`} cx={x} cy={y} r="2" />)}
    </g>
    <g stroke={CYAN}>
      <rect x="240.500" y="189.500" width="335" height="508" />
      <rect x="586.500" y="189.500" width="334" height="508" />
      {strips.map((s) => <path key={s.l} d={stripPath(s)} />)}
      {pockets.map(([x, y, h]) => <rect key={`${x} ${y}`} x={x} y={y} width="35" height={h} rx="7.500" />)}
    </g>
    <g stroke={MAGENTA}>
      {tallX.flatMap(([x, w]) => tallSlots.map((y) => <path key={`${x} ${y}`} d={`M${x} ${y}h${w}v1h-.4v16h.4v1h-${w}v-1h.4v-16h-.4z`} />))}
      {wideX.flatMap((x) => [300.500, 579.500].map((y) => <path key={`${x} ${y}`} d={`M${x} ${y}h18v2h-.4v3h.4v2h-18v-2h.4v-3h-.4z`} />))}
      {midX.map((x) => (
        <React.Fragment key={x}>
          <path d={`M${x} 186.500h17.500v8h.5v2h-2v-.5h-14v.5h-2z`} />
          <path d={`M${x} 440.500h18v2h-.4v2h.4v2h-18v-2h.4v-2h-.4z`} />
          <path d={`M${x} 690.500h2v.500h14v-.500h2v2h-.5v8h-17.500z`} />
        </React.Fragment>
      ))}
    </g>
    <g stroke={LIME}>
      {greens.map(([x, y]) => <circle key={`${x} ${y}`} cx={x} cy={y} r="5.500" />)}
    </g>
    <g transform="translate(920.2 160.2) scale(.33333)" strokeWidth="3">
      {brackets.map((d) => <path key={d} d={d} stroke={CYAN} />)}
      {bracketCircles.flatMap(([c, r, pts]) => pts.map(([x, y]) => <circle key={`${x} ${y}`} cx={x} cy={y} r={r} stroke={c} />))}
    </g>
    {fMarks.map(([x, y, flip]) => (
      <path key={x} transform={flip ? `translate(${x + 13.4} ${y + 7}) rotate(180)` : `translate(${x} ${y})`} d="M0 0H5V5H6.300V.500H9.600V4.800H13.400V7.500H0V5H1.200V2H0Z" fill="#0a1eff" />
    ))}
  </svg>
);

const Workspace = () => (
  <main className="flex w-[1139px] shrink-0 flex-col bg-[#f0f0f0]">
    <Toolbar />
    <div className="flex h-[20px] pt-px">
      <svg width="18" height="19" viewBox="0 0 18 19" className="shrink-0" fill="none" stroke="#333">
        <path d="M.500 17.500V.500h17" stroke="#aaa" /><path d="M0 18.500h18" stroke="#aaa" />
        <path d="M8.500 2v3M8.500 7v5M8.500 14v3M2 9.500h3M6 9.500h5M13 9.500h3" />
      </svg>
      <TopRuler />
    </div>
    <div className="flex h-[742px]">
      <SideRuler />
      <div className="w-[1103px]">
        <Board />
        <div className="flex h-[13px] items-center bg-[#f0f0f0]">
          <svg width="368" height="12" viewBox="0 0 368 12" fill="none" stroke="#444" strokeWidth="1.400"><path d="M7.500 3.500L5 6l2.500 2.500" /></svg>
          <div className="h-[11px] w-[366px] bg-[#cdcdcd]" />
          <svg className="ml-auto" width="14" height="12" viewBox="0 0 14 12" fill="none" stroke="#444" strokeWidth="1.400"><path d="M6.500 3.500L9 6 6.500 8.500" /></svg>
        </div>
      </div>
      <div className="flex h-[729px] w-[13px] flex-col items-center bg-[#f0f0f0]">
        <svg width="12" height="235" viewBox="0 0 12 235" fill="none" stroke="#444" strokeWidth="1.200"><path d="M3.500 9L6 6l2.500 3" /></svg>
        <div className="h-[258px] w-[11px] bg-[#cdcdcd]" />
        <svg className="mt-auto" width="12" height="14" viewBox="0 0 12 14" fill="none" stroke="#444" strokeWidth="1.200"><path d="M3.500 6L6 9l2.500-3" /></svg>
      </div>
    </div>
  </main>
);

/* ---------- right panel ---------- */

const items: [string, boolean?][] = [["Drill 1"], ["Drill extra", true], ["V-Carve LOGO 6mm"], ["Final Pocket 9mm"], ["Holes"], ["HOLE test"], ["Final Cut ouline"], ["Final Cut ouline extra"]];

const MoveButton = ({ down }: { down?: boolean }) => (
  <div className="flex h-[20px] w-[16px] items-center justify-center border border-[#b9b9b9] bg-[#e3e3e3]">
    <svg width="12" height="14" viewBox="0 0 12 14"><path transform={down ? "rotate(180 6 7)" : undefined} d="M6 .800L11 6.500H7.500V13h-3V6.500H1z" fill="#7db4f2" stroke="#1d4f9a" /></svg>
  </div>
);

const ToolpathTree = () => (
  <section className="relative flex-1 border-t border-[#8fa5bd]">
    <div className="ml-[8px] flex h-[26px] w-[194px] items-center border-b border-[#8b9097] pt-px pl-[2px] font-['Liberation_Sans'] text-[10px] tracking-[0.350px]">
      <span className="mr-[5px] size-[10px] border border-[#444] bg-white" />
      <span className="flex-1">Toolpaths</span>
      <div className="mr-px flex gap-px"><MoveButton /><MoveButton down /></div>
    </div>
    <ul className="ml-[9px] pt-[2px] font-['Liberation_Sans'] text-[9.800px]">
      {items.map(([t, sel], i) => (
        <li key={t} className="flex h-[13.550px] items-center">
          <svg width="9" height="13.550" viewBox="0 0 9 13.550"><path d={`M.500 ${i === 0 ? 5 : 0}V${i === 7 ? 7 : 13.5}M1 6.800h8`} stroke="#888" strokeDasharray="1 1" fill="none" /></svg>
          <span className="size-[10px] border border-[#8f8f8f] bg-[#eee] shadow-[inset_0_0_0_1px_#fff]" />
          <svg className="mx-[3px] overflow-visible" width="9" height="11" viewBox="0 0 9 11">
            {i === 2 ? <path d="M4.500 .5L9 5 5.800 8v2h-2.600V8L0 5z" fill="#9d8d4c" stroke="#7d6f38" strokeWidth=".6" /> : <><path d="M2.300 1h4v8l-2 2-2-2z" fill="#b7a263" /><path d="M5.500 2C3 4 6 6 3.500 9" stroke="#efe4b8" fill="none" /></>}
          </svg>
          <span className={sel ? "bg-[#0a78d7] font-bold tracking-[0.250px] text-white" : "tracking-[-0.020px]"}>{t}</span>
        </li>
      ))}
    </ul>
  </section>
);

const RightPanel = () => (
  <aside className="flex w-[212px] shrink-0 flex-col bg-[#f0f0f0]">
    <div className="flex h-[19px] items-center bg-[#fafafa] pr-[7px] pl-[3px]">
      <Grip />
      <span className="flex-1 pl-[7px] text-[9px] tracking-[-0.350px]">Toolpaths</span>
      <HeaderButtons />
    </div>
    <div className="mr-[2px] flex flex-1 flex-col border-r border-[#7d9cc6] bg-[#d7e4f2]">
      <div className="flex h-[72px] pl-[14px] text-[8px]">
        <div className="w-[52px] shrink-0 pt-[9px]">
          <div className="h-[14px] text-[9px] leading-[14px] font-bold tracking-[-0.300px] whitespace-nowrap">Material Setup</div>
          <button className="mt-[8px] block h-[16px] w-[46px] border border-[#9f9f9f] bg-[#e4e4e4] text-[9px] leading-[13px]">Set ...</button>
          <div className="mt-[7px] flex gap-[7px] text-[8px] leading-[14px] tracking-[-0.050px] whitespace-nowrap text-[#76808c]"><span>Home Pos:</span><span>X:2000.0 Y:600.0</span></div>
        </div>
        <svg width="83" height="52" viewBox="1393 56 83 52" className="-mr-[3px] mt-0 shrink-0">
          <path d="M1409.500 68h4v10l-2 4-2-3z" fill="#d9cf9a" stroke="#9b9363" strokeWidth=".7" />
          <path d="M1412 80.500h8v10" fill="none" stroke="#c41c1c" />
          <path d="M1410 94h20v13h-20z" fill="#c38157" /><path d="M1410 95l3-3.500h18l-1 3.500z" fill="#e3b087" />
          <circle cx="1410" cy="96.500" r="2.700" fill="#c00" />
          <path d="M1428 80.500h6M1428 91.500h6M1431 81v10M1433 95.500h6M1433 106.500h6M1436 96v10" stroke="#777" fill="none" />
          <text x="1394" y="99" fontSize="8" fontWeight="bold" fontFamily="Open Sans, sans-serif">Z 0</text>
          <text x="1436" y="89" fontSize="7.500" fill="#6f7a87" fontFamily="Open Sans, sans-serif">10.0mm</text>
          <text x="1442" y="104.500" fontSize="7.500" fill="#6f7a87" fontFamily="Open Sans, sans-serif">15.0mm</text>
        </svg>
        <div className="mt-[12px] h-[54px] w-px shrink-0 bg-[#9aa9bb]" />
        <div className="pt-[9px] pl-[7px] text-[8px] leading-[10px] text-[#5f6b7a]">
          <div className="pl-[2px] leading-[14px] tracking-[-0.100px] whitespace-nowrap text-black">XY Datum</div>
          <svg width="38" height="22" viewBox="0 0 38 22" className="-mt-px"><path d="M10 1h26L25 19H1z" fill="#c98d63" stroke="#a76d45" /><circle cx="2.500" cy="19" r="2.600" fill="#c00" /></svg>
          <div className="pt-px">X: 0.0</div>
          <div>Y: 0.0</div>
        </div>
      </div>
      <h2 className="mt-px h-[14px] pl-[12px] text-[8.800px] leading-[14px] font-semibold tracking-[-0.200px]">Toolpath Operations</h2>
      <div className="pl-[10px]">
        {[...opIcons, ...rightIcons].map((r, i) => (
          <div key={i} className="flex h-[24.800px]">
            {r.map((c, j) => <div key={j} className="flex w-[26.200px] items-center justify-center">{c}</div>)}
          </div>
        ))}
      </div>
      <div className="h-[13.200px]" />
      <ToolpathTree />
    </div>
  </aside>
);

/* ---------- annotations ---------- */

interface Frame { x1: number; x2: number; y1: number; y2: number; hs: number; hp: number; vs: number; vp: number; }
const frames: Frame[] = [
  { x1: 212, x2: 1300, y1: 166.700, y2: 730.500, hs: 205.800, hp: 24.180, vs: 159.800, vp: 24.570 },
  { x1: 7.700, x2: 184, y1: 126.200, y2: 424.500, hs: 0.800, hp: 25.250, vs: 119.700, vp: 25 },
  { x1: 1329, x2: 1535, y1: 124, y2: 193.700, hs: 1321, hp: 23.250, vs: 118, vp: 23.300 },
  { x1: 1328.500, x2: 1534.500, y1: 305.700, y2: 492.300, hs: 1321, hp: 23.250, vs: 299.300, vp: 23.350 },
];

const Frames = () => (
  <svg className="pointer-events-none absolute inset-0" width="1539" height="835" stroke="#fe0000" strokeWidth="6" fill="none">
    {frames.map((f) => {
      const l = f.x1 - 3;
      const t = f.y1 - 3;
      const h = { strokeDasharray: `12.700 ${f.hp - 12.7}`, strokeDashoffset: l - f.hs };
      const v = { strokeDasharray: `12.400 ${f.vp - 12.4}`, strokeDashoffset: t - f.vs };
      return (
        <g key={f.y1}>
          <path d={`M${l} ${f.y1}H${f.x2 + 3}`} {...h} />
          <path d={`M${l} ${f.y2}H${f.x2 + 3}`} {...h} />
          <path d={`M${f.x1} ${t}V${f.y2 + 3}`} {...v} />
          <path d={`M${f.x2} ${t}V${f.y2 + 3}`} {...v} />
        </g>
      );
    })}
  </svg>
);

const Notes = () => (
  <div className="font-['Lato'] font-black whitespace-nowrap text-[#fe0000]">
    <div className="absolute top-[127px] left-[230px] h-[33px] w-[376px] bg-white/60 pl-[8px] text-[28px] leading-[38px] tracking-[0.380px]">Geometry/drawing to be cut</div>
    <div className="absolute top-[425px] left-[1px] h-[103px] w-[146px] bg-white/60 pl-[7px] text-[28px] leading-[33.500px]">
      <div className="-mt-px tracking-[-0.550px]">Drawing/</div>
      <div className="tracking-[-0.200px]">Transform</div>
      <div className="tracking-[-0.300px]">tools</div>
    </div>
    <div className="absolute top-[197px] left-[1323px] h-[33px] w-[214px] bg-white/60 pl-[5px] text-[23.500px] leading-[28px] tracking-[-0.220px]">Toolpath operations</div>
    <div className="absolute top-[456px] left-[1322px] h-[33px] w-[215px] bg-white/60 pl-[13px] text-[26px] leading-[31px] tracking-[0.460px]">Ready toolpaths</div>
  </div>
);

export default function App() {
  return (
    <div className="relative flex h-[835px] w-[1539px] flex-col overflow-hidden bg-[#f0f0f0] font-['Open_Sans','Noto_Sans',sans-serif] text-[#111]">
      <TopBars />
      <div className="flex h-[784px]">
        <LeftPanel />
        <Workspace />
        <RightPanel />
      </div>
      <footer className="flex h-[14px] items-center border-t border-[#dcdcdc] pl-[3px] text-[9px] tracking-[-0.150px]">
        <span className="w-[1127px]">Ready</span>
        <span className="tracking-[-0.430px]">X:1086.2045 Y:1175.3937</span>
      </footer>
      <Notes />
      <Frames />
    </div>
  );
}
